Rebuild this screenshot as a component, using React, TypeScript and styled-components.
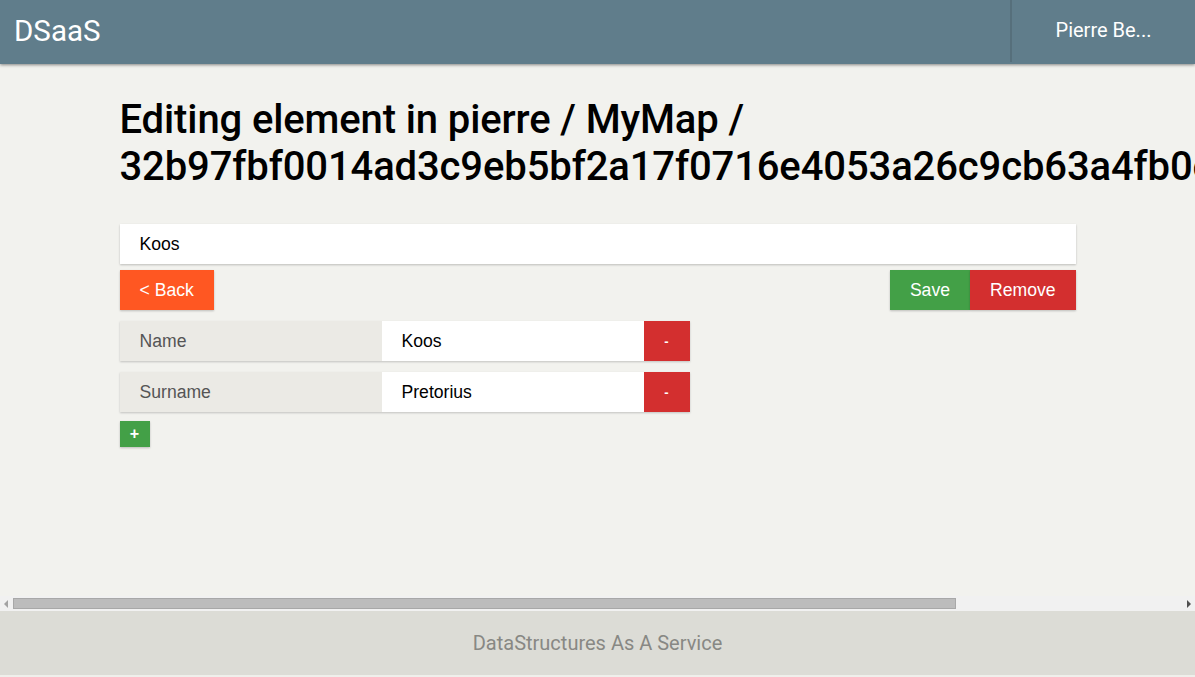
import React from "react";
import styled, { createGlobalStyle } from "styled-components";

const GlobalStyle = createGlobalStyle`
  html, body {
    margin: 0;
    padding: 0;
    height: 100%;
    background: #f2f2ee;
  }
  #root {
    height: 100%;
  }
  * { box-sizing: border-box; }
`;

const Page = styled.div`
  height: 100vh;
  display: flex;
  flex-direction: column;
  background: #f2f2ee;
`;

const TopBar = styled.header`
  flex: 0 0 64px;
  height: 64px;
  display: flex;
  align-items: stretch;
  background: #607d8b;
  box-shadow: 0 1px 3px rgba(0, 0, 0, 0.45);
  position: relative;
  z-index: 2;
`;

const Brand = styled.div`
  flex: 1;
  display: flex;
  align-items: center;
  padding-left: 14px;
  padding-bottom: 2px;
  font-family: Roboto, "Liberation Sans", sans-serif;
  font-size: 29.5px;
  color: #ffffff;
`;

const UserMenu = styled.div`
  width: 185px;
  display: flex;
  align-items: center;
  justify-content: center;
  border-left: 2px solid #566f7b;
  margin-bottom: 2px;
  padding-bottom: 2px;
  font-family: Roboto, "Liberation Sans", sans-serif;
  font-size: 20px;
  color: #ffffff;
`;

const Main = styled.main`
  flex: 1;
  overflow: hidden;
`;

const Container = styled.div`
  width: 80%;
  margin: 0 auto;
  padding-top: 32px;
`;

const Title = styled.h1`
  margin: 0 0 34px;
  font-family: Roboto, "Liberation Sans", sans-serif;
  font-weight: 500;
  font-size: 40px;
  line-height: 47px;
  letter-spacing: -0.12px;
  color: #000;
  white-space: nowrap;
`;

const TitleLine = styled.span`
  display: block;
`;

const NameInput = styled.div`
  height: 40px;
  display: flex;
  align-items: center;
  padding: 0 20px;
  background: #fff;
  box-shadow: 0 1px 2px rgba(0, 0, 0, 0.22);
  font-family: "Liberation Sans", Arial, sans-serif;
  font-size: 17.6px;
  color: #000;
`;

const ActionRow = styled.div`
  display: flex;
  justify-content: space-between;
  margin-top: 6px;
  margin-bottom: 11px;
`;

const ButtonGroup = styled.div`
  display: flex;
`;

const Button = styled.button<{ $bg: string }>`
  height: 40px;
  padding: 0 20px;
  border: none;
  border-radius: 0;
  background: ${(p) => p.$bg};
  color: #fff;
  font-family: "Liberation Sans", Arial, sans-serif;
  font-size: 17.6px;
  box-shadow: 0 1px 2px rgba(0, 0, 0, 0.22);
  cursor: pointer;
`;

const FieldRow = styled.div`
  display: grid;
  grid-template-columns: 262px 262px 46px;
  height: 40px;
  margin-bottom: 11px;
  width: 570px;
  box-shadow: 0 1px 2px rgba(0, 0, 0, 0.2);
`;

const FieldLabel = styled.div`
  display: flex;
  align-items: center;
  padding: 0 20px;
  background: #ebeae5;
  font-family: "Liberation Sans", Arial, sans-serif;
  font-size: 17.6px;
  color: #555;
`;

const FieldValue = styled.div`
  display: flex;
  align-items: center;
  padding: 0 20px;
  background: #fff;
  font-family: "Liberation Sans", Arial, sans-serif;
  font-size: 17.6px;
  color: #000;
`;

const SmallButton = styled.button<{ $bg: string }>`
  border: none;
  border-radius: 0;
  padding: 0;
  background: ${(p) => p.$bg};
  color: #fff;
  font-family: "Liberation Sans", Arial, sans-serif;
  font-size: 13px;
  font-weight: bold;
  display: flex;
  align-items: center;
  justify-content: center;
  cursor: pointer;
`;

const AddButton = styled(SmallButton)`
  width: 30px;
  height: 26px;
  margin-top: -2px;
  font-size: 16px;
  box-shadow: 0 1px 2px rgba(0, 0, 0, 0.22);
`;

const ScrollBar = styled.div`
  flex: 0 0 15px;
  height: 15px;
  display: flex;
  align-items: stretch;
  background: #f1f1f1;
`;

const ScrollArrow = styled.div<{ $dir: "left" | "right"; $color: string }>`
  flex: 0 0 12px;
  display: flex;
  align-items: center;
  justify-content: center;

  &::before {
    content: "";
    width: 0;
    height: 0;
    border-top: 4px solid transparent;
    border-bottom: 4px solid transparent;
    ${(p) =>
      p.$dir === "left"
        ? `border-right: 4px solid ${p.$color};`
        : `border-left: 4px solid ${p.$color};`}
  }
`;

const ScrollTrack = styled.div`
  flex: 1;
  display: flex;
  align-items: center;
  padding: 0 1px;
`;

const ScrollThumb = styled.div`
  width: 80.7%;
  height: 11px;
  background: #bcbcbc;
  border: 1px solid #a8a8a8;
`;

const Footer = styled.footer`
  flex: 0 0 66px;
  height: 66px;
  display: flex;
  align-items: center;
  justify-content: center;
  background: #dcdcd6;
  border-bottom: 2px solid #efefeb;
  font-family: Roboto, "Liberation Sans", sans-serif;
  font-size: 20px;
  color: #888884;
`;

const fields = [
  { key: "Name", value: "Koos" },
  { key: "Surname", value: "Pretorius" },
];

export default function App() {
  return (
    <>
      <GlobalStyle />
      <Page>
        <TopBar>
          <Brand>DSaaS</Brand>
          <UserMenu>Pierre Be...</UserMenu>
        </TopBar>
        <Main>
          <Container>
            <Title>
              <TitleLine>Editing element in pierre / MyMap /</TitleLine>
              <TitleLine>32b97fbf0014ad3c9eb5bf2a17f0716e4053a26c9cb63a4fb0ed4a1c2f9b7e35</TitleLine>
            </Title>
            <NameInput>Koos</NameInput>
            <ActionRow>
              <Button $bg="#ff5722">&lt; Back</Button>
              <ButtonGroup>
                <Button $bg="#43a047">Save</Button>
                <Button $bg="#d32f2f">Remove</Button>
              </ButtonGroup>
            </ActionRow>
            {fields.map((f) => (
              <FieldRow key={f.key}>
                <FieldLabel>{f.key}</FieldLabel>
                <FieldValue>{f.value}</FieldValue>
                <SmallButton $bg="#d32f2f">-</SmallButton>
              </FieldRow>
            ))}
            <AddButton $bg="#43a047">+</AddButton>
          </Container>
        </Main>
        <ScrollBar>
          <ScrollArrow $dir="left" $color="#a3a3a3" />
          <ScrollTrack>
            <ScrollThumb />
          </ScrollTrack>
          <ScrollArrow $dir="right" $color="#505050" />
        </ScrollBar>
        <Footer>DataStructures As A Service</Footer>
      </Page>
    </>
  );
}
